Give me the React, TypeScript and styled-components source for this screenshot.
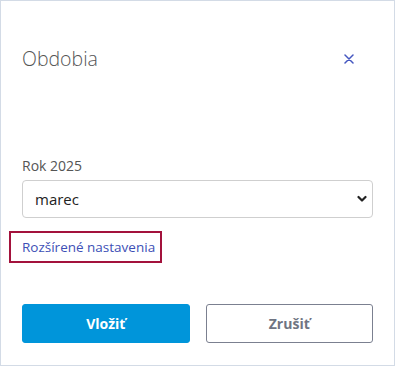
import React, { useState } from "react";
import styled, { createGlobalStyle } from "styled-components";

const GlobalStyle = createGlobalStyle`
  html, body {
    margin: 0;
    padding: 0;
    background: #ffffff;
  }
  body {
    font-family: "Open Sans", "Noto Sans", Arial, sans-serif;
    color: #555;
  }
  * { box-sizing: border-box; }
`;

const Dialog = styled.div`
  width: 395px;
  height: 366px;
  border: 1px solid #d3dbe6;
  background: #fff;
  padding: 44px 21px 0 21px;
  display: flex;
  flex-direction: column;
`;

const Header = styled.div`
  display: flex;
  align-items: center;
  justify-content: space-between;
  height: 28px;
`;

const Title = styled.h1`
  margin: 0;
  font-size: 19.5px;
  line-height: 28px;
  font-weight: 300;
  color: #555;
`;

const CloseButton = styled.button`
  border: 0;
  background: none;
  padding: 0;
  margin-right: 18px;
  width: 12px;
  height: 12px;
  display: flex;
  align-items: center;
  justify-content: center;
  cursor: pointer;
`;

const Body = styled.div`
  margin-top: 83px;
  display: flex;
  flex-direction: column;
`;

const Label = styled.label`
  font-size: 14px;
  line-height: 20px;
  color: #555;
`;

const SelectWrap = styled.div`
  position: relative;
  margin-top: 4px;
  height: 38px;
`;

const Select = styled.select`
  appearance: none;
  width: 100%;
  height: 38px;
  border: 1px solid #cfcfcf;
  border-radius: 4px;
  background: #fff;
  padding: 0 12px;
  font-family: inherit;
  font-size: 15px;
  color: #222;
  outline: none;
`;

const Chevron = styled.svg`
  position: absolute;
  right: 6px;
  top: 15px;
  pointer-events: none;
`;

const LinkBox = styled.div`
  margin-top: 13px;
  margin-left: -13px;
  align-self: flex-start;
  border: 2px solid #a3123c;
  padding: 4px 5px 4px 11px;
`;

const Link = styled.a`
  display: block;
  font-size: 13.5px;
  line-height: 20px;
  color: #3d4fb6;
  text-decoration: none;
  cursor: pointer;
`;

const Footer = styled.div`
  margin-top: 41px;
  display: grid;
  grid-template-columns: 1fr 1fr;
  gap: 16px;
`;

const Button = styled.button<{ $primary?: boolean }>`
  height: 39px;
  border-radius: 3px;
  font-family: inherit;
  font-size: 14px;
  font-weight: 700;
  cursor: pointer;
  border: 1px solid ${(p) => (p.$primary ? "#0095da" : "#7b8090")};
  background: ${(p) => (p.$primary ? "#0095da" : "#fff")};
  color: ${(p) => (p.$primary ? "#fff" : "#6f7482")};
`;

const months = [
  "január",
  "február",
  "marec",
  "apríl",
  "máj",
  "jún",
  "júl",
  "august",
  "september",
  "október",
  "november",
  "december",
];

export default function App() {
  const [month, setMonth] = useState("marec");

  return (
    <>
      <GlobalStyle />
      <Dialog>
        <Header>
          <Title>Obdobia</Title>
          <CloseButton aria-label="Zavrieť">
            <svg width="10" height="10" viewBox="0 0 10 10">
              <path
                d="M1 1 L9 9 M9 1 L1 9"
                stroke="#4557c0"
                strokeWidth="1.5"
                strokeLinecap="round"
              />
            </svg>
          </CloseButton>
        </Header>
        <Body>
          <Label htmlFor="month">Rok 2025</Label>
          <SelectWrap>
            <Select
              id="month"
              value={month}
              onChange={(e) => setMonth(e.target.value)}
            >
              {months.map((m) => (
                <option key={m} value={m}>
                  {m}
                </option>
              ))}
            </Select>
            <Chevron width="10" height="8" viewBox="0 0 10 8">
              <path
                d="M1.5 2 L5 5.5 L8.5 2"
                fill="none"
                stroke="#222"
                strokeWidth="2.2"
                strokeLinecap="round"
                strokeLinejoin="round"
              />
            </Chevron>
          </SelectWrap>
          <LinkBox>
            <Link>Rozšírené nastavenia</Link>
          </LinkBox>
          <Footer>
            <Button $primary>Vložiť</Button>
            <Button>Zrušiť</Button>
          </Footer>
        </Body>
      </Dialog>
    </>
  );
}
